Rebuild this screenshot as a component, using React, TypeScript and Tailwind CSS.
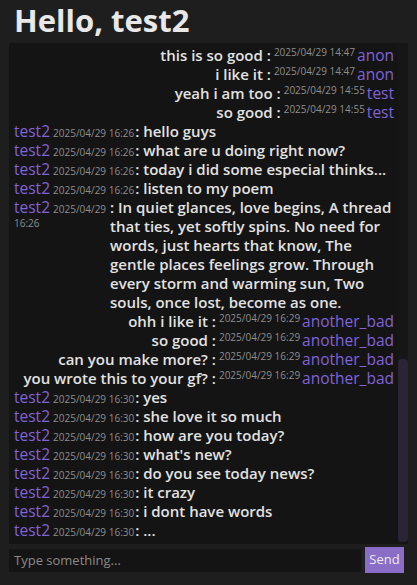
type Msg = { user: string; time: string; text: string; mine: boolean; metaW?: string };

const messages: Msg[] = [
  { user: "anon", time: "2025/04/29 14:47", text: "this is so good :", mine: false },
  { user: "anon", time: "2025/04/29 14:47", text: "i like it :", mine: false },
  { user: "test", time: "2025/04/29 14:55", text: "yeah i am too :", mine: false },
  { user: "test", time: "2025/04/29 14:55", text: "so good :", mine: false },
  { user: "test2", time: "2025/04/29 16:26", text: "hello guys", mine: true },
  { user: "test2", time: "2025/04/29 16:26", text: "what are u doing right now?", mine: true },
  { user: "test2", time: "2025/04/29 16:26", text: "today i did some especial thinks...", mine: true },
  { user: "test2", time: "2025/04/29 16:26", text: "listen to my poem", mine: true },
  {
    user: "test2",
    time: "2025/04/29 16:26",
    text: "In quiet glances, love begins, A thread that ties, yet softly spins. No need for words, just hearts that know, The gentle places feelings grow. Through every storm and warming sun, Two souls, once lost, become as one.",
    mine: true,
    metaW: "w-[95px]",
  },
  { user: "another_bad", time: "2025/04/29 16:29", text: "ohh i like it :", mine: false },
  { user: "another_bad", time: "2025/04/29 16:29", text: "so good :", mine: false },
  { user: "another_bad", time: "2025/04/29 16:29", text: "can you make more? :", mine: false },
  { user: "another_bad", time: "2025/04/29 16:29", text: "you wrote this to your gf? :", mine: false },
  { user: "test2", time: "2025/04/29 16:30", text: "yes", mine: true },
  { user: "test2", time: "2025/04/29 16:30", text: "she love it so much", mine: true },
  { user: "test2", time: "2025/04/29 16:30", text: "how are you today?", mine: true },
  { user: "test2", time: "2025/04/29 16:30", text: "what's new?", mine: true },
  { user: "test2", time: "2025/04/29 16:30", text: "do you see today news?", mine: true },
  { user: "test2", time: "2025/04/29 16:30", text: "it crazy", mine: true },
  { user: "test2", time: "2025/04/29 16:30", text: "i dont have words", mine: true },
  { user: "test2", time: "2025/04/29 16:30", text: "...", mine: true },
];

function Row({ m }: { m: Msg }) {
  if (!m.mine) {
    return (
      <div className="flex justify-end items-start">
        <span className="font-semibold">{m.text}</span>
        <span className="ml-[3px] text-[10px] leading-[12px] text-[#8e8e8e]">{m.time}</span>
        <span className="ml-[2px] text-[15.5px] text-[#8063d8]">{m.user}</span>
      </div>
    );
  }
  return (
    <div className="flex items-start">
      <div className={`shrink-0 text-[10px] leading-[12px] text-[#8e8e8e] ${m.metaW ?? ""}`}>
        <span className="text-[15.5px] leading-[19px] text-[#8063d8]">{m.user}</span>
        <span className="ml-[3px]">{m.time}</span>
      </div>
      <div className="ml-[1px] min-w-0 flex-1 font-semibold">: {m.text}</div>
    </div>
  );
}

export default function App() {
  return (
    <main className="min-h-screen bg-[#1e1e1e] px-[9px] font-['Open_Sans',sans-serif] text-[#e2e2e2]">
      <h1 className="pl-[5px] text-[31px] font-bold leading-[40px] text-[#e8e8e8]">Hello, test2</h1>
      <div className="mt-[3px] flex h-[501px] rounded-[2px] bg-[#141414]">
        <div className="flex min-w-0 flex-1 flex-col justify-end overflow-hidden pl-[5px] pr-[4px] pb-[4px] text-[15px] leading-[19px]">
          {messages.map((m, i) => (
            <Row key={i} m={m} />
          ))}
        </div>
        <div className="flex w-[10px] flex-col justify-end bg-[#161616] pb-[2px]">
          <div className="h-[183px] rounded-[4px] bg-[#2a2536]" />
        </div>
      </div>
      <form className="mt-[3px] flex items-center gap-[4px] pr-[4px]" onSubmit={(e) => e.preventDefault()}>
        <input
          className="h-[23px] min-w-0 flex-1 bg-[#141414] pl-[5px] text-[13px] text-[#e6e6e6] outline-none placeholder:text-[#8a8a8a]"
          placeholder="Type something..."
        />
        <button className="h-[26px] w-[39px] bg-[#8a6dc6] text-[13px] text-[#ececec]">Send</button>
      </form>
    </main>
  );
}
